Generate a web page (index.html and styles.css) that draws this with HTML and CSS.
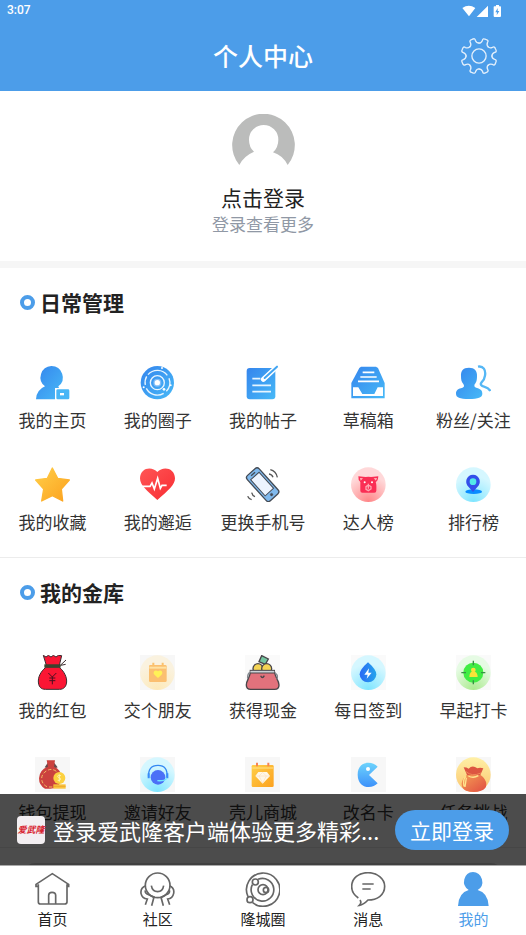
FILE: index.html
```html
<!DOCTYPE html>
<html lang="zh-CN">
<head>
<meta charset="utf-8">
<meta name="viewport" content="width=device-width, initial-scale=1">
<title>个人中心</title>
<link rel="stylesheet" href="styles.css">
</head>
<body>
<svg class="defs" width="0" height="0" aria-hidden="true">
  <defs>
    <linearGradient id="blue" x1="0" y1="0" x2="1" y2="1"><stop offset="0" stop-color="#3585ed"/><stop offset="1" stop-color="#47b9f7"/></linearGradient>
    <linearGradient id="gold" x1="0" y1="0" x2="1" y2="1"><stop offset="0" stop-color="#ffcf49"/><stop offset="1" stop-color="#fca11e"/></linearGradient>
    <linearGradient id="red" x1="0" y1="0" x2="1" y2="1"><stop offset="0" stop-color="#ff5656"/><stop offset="1" stop-color="#f82c32"/></linearGradient>
    <radialGradient id="rose" cx=".5" cy="1" r=".75"><stop offset="0" stop-color="#ff8587"/><stop offset="1" stop-color="#ffd8d9"/></radialGradient>
    <radialGradient id="aqua" cx=".5" cy="1" r=".75"><stop offset="0" stop-color="#7ee5ff"/><stop offset="1" stop-color="#d5f7ff"/></radialGradient>
    <radialGradient id="cream" cx=".5" cy="1" r=".75"><stop offset="0" stop-color="#fde9b8"/><stop offset="1" stop-color="#faf2df"/></radialGradient>
    <radialGradient id="mint" cx=".5" cy="1" r=".75"><stop offset="0" stop-color="#abea8e"/><stop offset="1" stop-color="#e6fbe4"/></radialGradient>
    <linearGradient id="drop" x1="0" y1="0" x2="1" y2="0"><stop offset="0" stop-color="#2b69f5"/><stop offset="1" stop-color="#24a5ec"/></linearGradient>
    <linearGradient id="pac" x1="0" y1="0" x2="0" y2="1"><stop offset="0" stop-color="#6ed4fc"/><stop offset="1" stop-color="#3d91fa"/></linearGradient>
    <linearGradient id="sun" x1="0" y1="0" x2="0" y2="1"><stop offset="0" stop-color="#fff0a6"/><stop offset="1" stop-color="#fbc66e"/></linearGradient>
    <linearGradient id="pouch" x1="0" y1="0" x2="1" y2="1"><stop offset="0" stop-color="#f5a055"/><stop offset="1" stop-color="#e04c42"/></linearGradient>
  </defs>
</svg>
<div class="app">
  <header class="header">
    <div class="status">
      <span>3:07</span>
      <svg class="status-icons" viewBox="0 0 120 36" aria-hidden="true">
        <path fill="#fff" d="M1 9Q20-5 40 9L21 34ZM78 2V36H44ZM97 4H102V0H111V4H115Q117 4 117 7V33Q117 36 114 36H98Q95 36 95 33V7Q95 4 97 4Z"/>
        <path fill="#4c9de9" d="M107 9L100 22H105L104 31L112 18H107Z"/>
      </svg>
    </div>
    <div class="titlebar">
      <h1>个人中心</h1>
      <button class="settings" type="button" aria-label="设置">
        <svg viewBox="-56 -56 112 112" fill="none" stroke="#e3effb" stroke-width="4" stroke-linecap="round">
          <defs><path id="tooth" d="M0-38C6-38 8-41 10-46C11-51 14-52 20-49C27-47 28-44 25-40C23-35 23-31 27-27"/></defs>
          <use href="#tooth"/><use href="#tooth" transform="rotate(45)"/><use href="#tooth" transform="rotate(90)"/><use href="#tooth" transform="rotate(135)"/><use href="#tooth" transform="rotate(180)"/><use href="#tooth" transform="rotate(225)"/><use href="#tooth" transform="rotate(270)"/><use href="#tooth" transform="rotate(315)"/>
          <circle r="21"/>
        </svg>
      </button>
    </div>
  </header>

  <main class="content">
    <a class="profile" href="#">
      <svg class="avatar" viewBox="0 0 189 189" aria-hidden="true">
        <path fill="#bbbcbb" d="M22 153A94 94 0 1 1 167 153Q152 124 123 115Q139 100 139 77A44 44 0 0 0 51 77Q51 100 66 113Q35 126 22 153Z"/>
      </svg>
      <strong>点击登录</strong>
      <span>登录查看更多</span>
    </a>

    <section class="panel">
      <h2>日常管理</h2>
      <div class="grid">
        <a class="item" href="#"><svg viewBox="0 0 105 105"><path fill="url(#blue)" d="M49 3A34 34 0 0 1 70 64L72 69H60V103H3Q4 75 30 64A34 34 0 0 1 49 3Z"/><rect x="64" y="73" width="39" height="30" rx="4" fill="#48b6f6"/><path d="M75 84h12v7H75z" fill="#fff"/></svg><span>我的主页</span></a>
        <a class="item" href="#"><svg viewBox="0 0 105 105"><circle cx="52" cy="53" r="50" fill="url(#blue)"/><g fill="none" stroke="#e9f6ff" stroke-width="4"><path d="M24 29A37 37 0 0 1 82 31M87 40A37 37 0 0 1 79 79M71 85A37 37 0 0 1 19 70M16 60A37 37 0 0 1 20 34"/><circle cx="52" cy="53" r="21"/></g><circle cx="52" cy="53" r="12" fill="#82bdf7"/><g fill="#fff"><circle cx="52" cy="53" r="8"/><circle cx="66" cy="9" r="3"/><circle cx="11" cy="67" r="3"/><circle cx="72" cy="73" r="4"/><circle cx="92" cy="61" r="3"/></g></svg><span>我的圈子</span></a>
        <a class="item" href="#"><svg viewBox="0 0 105 105"><rect x="5" y="9" width="86" height="94" rx="9" fill="url(#blue)"/><path d="M22 41H46M22 61H78M22 80H78" stroke="#e6f5ff" stroke-width="5"/><path d="M55 43L95 6" stroke="#fff" stroke-width="15" stroke-linecap="round"/><path d="M59 39L96 5" stroke="#42a5f2" stroke-width="6" stroke-linecap="round"/></svg><span>我的帖子</span></a>
        <a class="item" href="#"><svg viewBox="0 0 105 105"><path fill="url(#blue)" d="M30 5H75L81 9L101 54V100H1V54L25 9Z"/><path d="M35 22H70M28 36H77M21 49H84" stroke="#fff" stroke-width="5"/><path fill="#fff" d="M6 67H22L34 87H70L80 67H96V93H6Z"/></svg><span>草稿箱</span></a>
        <a class="item" href="#"><svg viewBox="0 0 105 105"><path fill="url(#blue)" d="M39 8C56 8 64 18 63 33C63 48 60 53 56 58C53 67 59 68 66 70C75 73 79 78 79 86C79 97 67 102 39 102S0 97 0 86C0 78 4 72 15 70C22 68 27 65 22 57C16 51 15 43 15 34C14 18 21 8 39 8Z"/><path d="M66 5C82 2 90 15 87 32C86 43 82 47 76 53C72 58 76 63 84 65Q98 69 103 78" fill="none" stroke="#55b7f5" stroke-width="7"/></svg><span>粉丝/关注</span></a>
        <a class="item" href="#"><svg viewBox="0 0 105 105"><path fill="url(#gold)" stroke="url(#gold)" stroke-width="4" stroke-linejoin="round" d="M52 3L68 34L103 39L79 66L83 102L52 86L20 102L26 66L2 39L37 34Z"/></svg><span>我的收藏</span></a>
        <a class="item" href="#"><svg viewBox="0 0 105 105"><path fill="url(#red)" d="M52 15C68-3 104 1 105 34C105 54 85 70 52 99C20 70 0 55 0 34C1 1 36-3 52 15Z"/><path d="M0 58H30L36 48L43 66L53 34L61 64L66 55H80" fill="none" stroke="#fff" stroke-width="5"/></svg><span>我的邂逅</span></a>
        <a class="item" href="#"><svg viewBox="0 0 105 105"><g transform="rotate(-42 53 53)" stroke="#444b55"><rect x="29" y="2" width="48" height="102" rx="9" fill="#80b9ed" stroke-width="4"/><rect x="36" y="18" width="34" height="65" fill="#edf4ff" stroke-width="3"/><path d="M45 10H61" stroke-width="4"/><circle cx="53" cy="93" r="4" fill="#444b55"/></g><path d="M72 21Q81 22 84 31M76 8Q93 12 97 31M8 88Q12 97 20 98M20 77Q22 86 30 89" fill="none" stroke="#555" stroke-width="4"/></svg><span>更换手机号</span></a>
        <a class="item" href="#"><svg viewBox="0 0 105 105"><circle cx="52" cy="53" r="52" fill="url(#rose)"/><path fill="#fa2e54" d="M22 28L44 30Q52 28 60 30L82 28Q81 43 74 45Q77 50 76 71Q76 77 70 77H34Q28 77 28 71V45Q21 39 22 28Z"/><path fill="#ffb3b7" d="M27 33L36 34L29 41ZM78 33L68 34L75 41Z"/><g fill="#fff"><circle cx="41" cy="46" r="3"/><circle cx="63" cy="46" r="3"/></g><path d="M45 59V67L52 71L60 66V59L52 54ZM52 50V65" fill="none" stroke="#ffa5af" stroke-width="4"/></svg><span>达人榜</span></a>
        <a class="item" href="#"><svg viewBox="0 0 105 105"><circle cx="52" cy="53" r="52" fill="url(#aqua)"/><ellipse cx="53" cy="74" rx="25" ry="7" fill="#098bff"/><path d="M51 23A21 21 0 0 1 64 60L51 75L38 60A21 21 0 0 1 51 23Z" fill="#344eea"/><circle cx="51" cy="44" r="10" fill="#53e8e9"/></svg><span>排行榜</span></a>
      </div>
    </section>

    <section class="panel">
      <h2>我的金库</h2>
      <div class="grid">
        <a class="item" href="#"><svg viewBox="0 0 105 105"><g stroke="#3b2c2f" stroke-width="3"><path fill="#fb1634" d="M25 1L33 6L40 1L48 6L55 1L63 6L70 1L80 2L73 31H34ZM34 36H71C82 43 95 61 95 78C95 96 85 103 74 103H31C18 103 10 95 10 78C10 59 24 43 34 36Z"/><path d="M76 31L93 15M77 31L92 28" fill="none"/></g><path d="M28 33H77" stroke="#3b442e" stroke-width="10"/><path d="M40 54L52 66L64 54M52 66V88M43 69H61M43 77H61" fill="none" stroke="#4a1020" stroke-width="3"/></svg><span>我的红包</span></a>
        <a class="item" href="#"><svg class="tile" viewBox="0 0 105 105"><circle cx="52" cy="53" r="52" fill="url(#cream)"/><rect x="27" y="30" width="53" height="51" rx="4" fill="#fbbf70"/><path d="M28 38H79" stroke="#ffe2a2" stroke-width="6"/><path d="M40 23V34M68 23V34" stroke="#fbc16c" stroke-width="6"/><path fill="#fff257" d="M54 49C65 41 71 54 64 60L54 69L44 60C37 54 43 41 54 49Z"/></svg><span>交个朋友</span></a>
        <a class="item" href="#"><svg viewBox="0 0 105 105"><path class="paper" d="M0 0H105V105H0Z"/><g stroke="#49464a" stroke-width="4"><path d="M50 2L70 12L61 28L42 20Z" fill="#74c6a0"/><circle cx="39" cy="41" r="15" fill="#f5d555"/><circle cx="65" cy="41" r="15" fill="#f5d555"/><path fill="#e2727c" d="M16 52H89C90 68 102 76 102 90Q102 103 89 103H17Q4 103 4 90C4 76 15 68 16 52Z"/><path d="M14 50H90" stroke="#49464a" stroke-width="11"/><path d="M16 50H88" stroke="#ccd2d7" stroke-width="5"/><path d="M47 62Q52 73 58 62" fill="none"/><path d="M14 53Q7 57 8 71M91 54Q100 61 96 73" fill="none" stroke="#858a91"/></g></svg><span>获得现金</span></a>
        <a class="item" href="#"><svg viewBox="0 0 105 105"><path class="paper" d="M0 0H105V105H0Z"/><circle cx="52" cy="53" r="52" fill="url(#aqua)"/><path fill="url(#drop)" d="M51 22Q76 44 76 58A25 24 0 0 1 26 58Q26 44 51 22Z"/><path fill="#fff" d="M54 40L40 59H50L47 71L62 53H52Z"/></svg><span>每日签到</span></a>
        <a class="item" href="#"><svg viewBox="0 0 105 105"><path class="paper" d="M0 0H105V105H0Z"/><circle cx="52" cy="53" r="52" fill="url(#mint)"/><circle cx="52" cy="53" r="30" fill="#40ed43"/><path d="M52 17V31M52 76V88M16 53H30M75 53H88" stroke="#389246" stroke-width="4"/><circle cx="52" cy="45" r="7" fill="#f9e438"/><path fill="#f9e438" d="M47 50H57Q65 54 65 66H40Q40 54 47 50Z"/></svg><span>早起打卡</span></a>
        <a class="item" href="#"><svg class="tile" viewBox="0 0 105 105"><path fill="#65494b" d="M29 31L38 18L58 18L68 31L48 39Z"/><path fill="#cb413e" d="M35 10H60L57 29Q79 37 79 63Q77 95 46 95H30Q12 86 12 64Q13 38 39 29Z"/><path d="M64 43Q49 32 34 42Q20 51 20 65Q21 83 38 90H52" fill="none" stroke="#f2bd65" stroke-width="3" stroke-dasharray="10 6"/><circle cx="73" cy="63" r="18" fill="#fcd13f"/><path d="M55 82H92V95H55Z" fill="#fac33c"/><path d="M55 88H92" stroke="#e69d2b" stroke-width="2"/><path d="M78 56Q67 52 68 59Q70 63 76 64Q79 71 68 70M73 52V74" fill="none" stroke="#fff1ae" stroke-width="3"/></svg><span>钱包提现</span></a>
        <a class="item" href="#"><svg class="tile" viewBox="0 0 105 105"><circle cx="52" cy="53" r="52" fill="url(#aqua)"/><path d="M26 61Q23 25 54 25Q84 25 81 61" fill="none" stroke="#3389f3" stroke-width="4"/><circle cx="54" cy="61" r="22" fill="#4b70f7"/><path d="M26 49V64M82 49V64" stroke="#388bfa" stroke-width="6"/><path d="M80 64Q73 73 52 71" fill="none" stroke="#71e5ff" stroke-width="4"/></svg><span>邀请好友</span></a>
        <a class="item" href="#"><svg class="tile" viewBox="0 0 105 105"><rect x="20" y="24" width="66" height="66" rx="4" fill="url(#gold)"/><path d="M22 33H84" stroke="#ffe48b" stroke-width="3"/><path d="M36 17V28M70 17V28" stroke="#f68454" stroke-width="6"/><path fill="#fff7e7" d="M40 45H66L75 57L53 80L31 57Z"/><path d="M33 57H72M42 57L53 78L64 57L53 46Z" fill="none" stroke="#fce0be" stroke-width="2"/></svg><span>壳儿商城</span></a>
        <a class="item" href="#"><svg class="tile" viewBox="0 0 105 105"><path fill="url(#pac)" d="M80 29L54 54L80 79C63 98 20 95 20 53C20 12 62 9 80 29Z"/><circle cx="51" cy="36" r="6" fill="#fff"/></svg><span>改名卡</span></a>
        <a class="item" href="#"><svg class="tile" viewBox="0 0 105 105"><circle cx="52" cy="53" r="52" fill="url(#sun)"/><path fill="url(#pouch)" d="M35 52L70 51Q91 66 91 82Q91 97 75 101Q55 109 30 101Q16 94 17 79Q19 64 35 52Z"/><path fill="#dd5541" d="M23 31Q32 31 38 35Q49 22 64 34Q72 31 82 34L73 54H33Z"/><path d="M30 44Q48 60 75 48" fill="none" stroke="#ef8859" stroke-width="3"/><path d="M37 57Q52 65 67 56M30 58Q20 66 24 88M31 62L27 90" fill="none" stroke="#ffe58d" stroke-width="4"/></svg><span>任务挑战</span></a>
      </div>
    </section>
    <div class="card"></div>
  </main>

  <div class="bottom">
    <aside class="login-bar">
      <span class="logo">爱武隆</span>
      <p>登录爱武隆客户端体验更多精彩...</p>
      <button type="button">立即登录</button>
    </aside>
    <nav class="tabs">
      <a href="#"><svg viewBox="0 0 105 105"><path d="M10 43H3V37L52 5L101 37V43H95M10 37V90Q10 96 16 96H89Q96 96 96 90V37M41 95V70Q41 61 51 61Q62 61 62 70V95"/></svg><span>首页</span></a>
      <a href="#"><svg viewBox="0 0 105 105"><circle cx="53" cy="40" r="37"/><path d="M34 41Q37 59 53 59Q68 59 71 41M17 41Q1 47 3 64Q6 79 22 81L16 98M16 55Q14 65 26 68L42 75L35 101M89 41Q104 48 101 64Q98 79 83 81L89 98M88 55Q91 65 78 68L63 76L70 101"/></svg><span>社区</span></a>
      <a href="#"><svg viewBox="0 0 105 105"><path d="M9 74A50 50 0 1 1 23 92M22 38A34 34 0 1 0 39 22"/><circle cx="31" cy="30" r="9"/><circle cx="15" cy="83" r="9"/><circle cx="54" cy="53" r="15"/><circle cx="63" cy="54" r="8"/></svg><span>隆城圈</span></a>
      <a href="#"><svg viewBox="0 0 105 105"><path d="M22 78Q2 64 2 44C2 18 24 2 51 2S101 20 101 43C101 70 78 84 51 84Q38 98 25 100Q33 92 27 84M34 36H68M34 51H59"/></svg><span>消息</span></a>
      <a class="active" href="#" aria-current="page"><svg viewBox="0 0 105 105"><path d="M51 0A28 29 0 0 1 65 54Q96 62 98 102H6Q8 62 38 54A28 29 0 0 1 51 0Z"/></svg><span>我的</span></a>
    </nav>
  </div>
</div>
</body>
</html>
```
FILE: styles.css
```css
*, *::before { box-sizing: border-box; }
html, body { height: 100%; }
body {
  margin: 0;
  background: #fff;
  color: #333;
  font-family: "Noto Sans CJK SC", sans-serif;
}
a { color: inherit; text-decoration: none; }
h1, h2, p { margin: 0; }
button { border: 0; padding: 0; font: inherit; color: inherit; cursor: pointer; }
svg { display: block; }
.defs { position: absolute; }

.app { display: flex; flex-direction: column; height: 100vh; position: relative; }

.header { flex: none; background: #4c9de9; color: #fff; }
.status {
  display: flex;
  align-items: center;
  justify-content: space-between;
  height: 21px;
  padding: 0 24px 0 7px;
  font: 500 12px/21px Roboto, sans-serif;
}
.status-icons { width: 40px; height: 12px; }
.titlebar {
  display: grid;
  grid-template-columns: 1fr auto 1fr;
  align-items: center;
  height: 70px;
  padding: 0 28px;
}
.titlebar h1 { grid-column: 2; padding-bottom: 2px; font-size: 25px; font-weight: 500; line-height: 36px; }
.settings { justify-self: end; width: 38px; height: 38px; background: none; }

.content { flex: 1; min-height: 0; overflow-y: auto; scrollbar-width: none; }
.profile {
  display: flex;
  flex-direction: column;
  align-items: center;
  padding: 23px 0 25px;
  border-bottom: 7px solid #f6f6f6;
}
.avatar { width: 63px; height: 63px; margin-bottom: 5px; }
.profile strong { font-size: 21px; font-weight: 400; line-height: 30px; color: #222; }
.profile span { font-size: 17px; line-height: 24px; color: #9098a5; }

.panel { padding: 19px 0 23px; border-bottom: 1px solid #ececec; }
.panel h2 {
  display: flex;
  align-items: center;
  gap: 5px;
  padding-left: 20px;
  margin-bottom: 48px;
  font-size: 21px;
  line-height: 30px;
  font-weight: 700;
  color: #222;
}
.panel h2::before {
  content: "";
  width: 15px;
  height: 15px;
  border: 4px solid #4c9de9;
  border-radius: 50%;
}
.grid { display: grid; grid-template-columns: repeat(5, 1fr); row-gap: 35px; }
.item { display: flex; flex-direction: column; align-items: center; gap: 7px; }
.item svg { width: 35px; height: 35px; }
.item span { font-size: 17px; line-height: 25px; white-space: nowrap; }
.tile { background: #f7f7f7; }
.paper { fill: #fafafa; }
.card { height: 120px; margin: 15px 23px; border-radius: 12px; background: #d8d8d8; }

.bottom { flex: none; position: relative; }
.login-bar {
  position: absolute;
  bottom: 100%;
  left: 0;
  right: 0;
  display: flex;
  align-items: center;
  height: 71px;
  padding: 0 17px;
  background: rgba(0, 0, 0, .7);
  color: #fff;
}
.logo {
  flex: none;
  width: 28px;
  height: 28px;
  border-radius: 4px;
  background: #f3eff2;
  color: #d8202d;
  font-size: 9px;
  font-style: italic;
  font-weight: 700;
  line-height: 28px;
  text-align: center;
  white-space: nowrap;
}
.login-bar p {
  flex: 1;
  min-width: 0;
  margin: 0 8px;
  font-size: 22px;
  line-height: 32px;
  white-space: nowrap;
}
.login-bar button {
  flex: none;
  height: 40px;
  padding: 0 15px;
  border-radius: 20px;
  background: #4c9de9;
  font-size: 21px;
  line-height: 40px;
}
.tabs {
  display: grid;
  grid-template-columns: repeat(5, 1fr);
  height: 70px;
  padding-top: 6px;
  border-top: 1px solid #aaa;
  background: #fff;
  color: #222;
}
.tabs a { display: flex; flex-direction: column; align-items: center; }
.tabs svg { width: 35px; height: 35px; fill: none; stroke: #666; stroke-width: 5; }
.tabs span { font-size: 15px; line-height: 24px; }
.tabs .active { color: #4c9de9; }
.tabs .active svg { fill: #4c9de9; stroke: none; }
```
